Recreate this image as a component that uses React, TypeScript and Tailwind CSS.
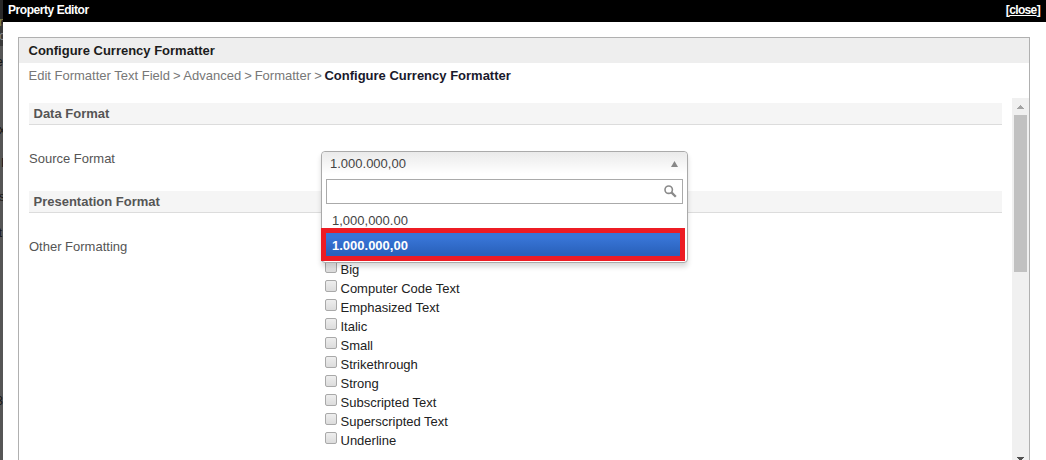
const formats = ['Big', 'Computer Code Text', 'Emphasized Text', 'Italic', 'Small', 'Strikethrough', 'Strong', 'Subscripted Text', 'Superscripted Text', 'Underline'];
const crumbs = ['Edit Formatter Text Field', 'Advanced', 'Formatter'];

function SectionBar({ title }: { title: string }) {
  return (
    <h2 className="flex h-[22px] items-center border-b border-[#dcdcdc] bg-[#f5f5f5] pl-[4.5px] text-[13px] font-bold text-[#555]">
      {title}
    </h2>
  );
}

function Select() {
  return (
    <div className="absolute top-[53px] left-[292px] h-[112px] w-[367px] rounded-[4px] border border-[#aaa] bg-white shadow-[0_4px_5px_rgba(0,0,0,0.15)]">
      <div className="flex h-[27px] items-center justify-between rounded-t-[4px] bg-linear-to-b from-[#eaeaea] to-white to-80% pr-[9px] pb-[4px] pl-[8px] text-[13px] text-[#444]">
        <span>1.000.000,00</span>
        <svg width="7" height="6" viewBox="0 0 7 6"><path d="M3.5 0 7 6H0Z" fill="#888" /></svg>
      </div>
      <div className="mx-[4px] flex h-[25px] items-center justify-end border border-[#aaa] bg-white pr-[5px]">
        <svg width="13" height="13" viewBox="0 0 13 13" fill="none" stroke="#8a8a8a">
          <circle cx="4.7" cy="4.7" r="3.7" strokeWidth="1.6" />
          <path d="m7.4 7.4 4.4 4.4" strokeWidth="2.3" />
        </svg>
      </div>
      <div className="flex h-[24px] items-center pt-[9px] pl-[10px] text-[13px] text-[#444]">1,000,000.00</div>
      <div className="-ml-px flex h-[33px] w-[364px] items-center border-[5px] border-[#ed1c24] bg-linear-to-b from-[#3875d7] from-20% to-[#2a62bc] to-90% pt-[2px] pl-[6px] text-[13px] font-bold text-white">
        1.000.000,00
      </div>
    </div>
  );
}

function Scrollbar() {
  return (
    <div className="flex w-[17px] shrink-0 flex-col items-center bg-[#f0f0f0]">
      <svg className="mt-[7px] shrink-0" width="7" height="4" viewBox="0 0 7 4" shapeRendering="crispEdges"><path d="M3 0h1v1h1v1h1v1h1v1H0V3h1V2h1V1h1Z" fill="#a3a3a3" /></svg>
      <div className="mt-[6px] h-[157px] w-[13px] bg-[#c1c1c1]" />
      <svg className="mt-auto mb-[-1px] shrink-0" width="7" height="4" viewBox="0 0 7 4" shapeRendering="crispEdges"><path d="M0 0h7v1H6v1H5v1H4v1H3V3H2V2H1V1H0Z" fill="#505050" /></svg>
    </div>
  );
}

function Backdrop() {
  return (
    <div className="relative w-[3px] shrink-0 overflow-hidden bg-[#565656] text-[12px] leading-[14px] text-[#161616]">
      <div className="h-[24px] bg-[#292929]" />
      <div className="h-[22px] bg-[#3b3b3b]" />
      <span className="absolute top-[15px] right-0 text-[#8e8a50]">r</span>
      <span className="absolute top-[29px] right-[-2px] text-[#888]">c</span>
      <span className="absolute top-[55px] right-0">e</span>
      <span className="absolute top-[123px] right-[-2px]">x</span>
      <span className="absolute top-[156px] left-[1px]">I</span>
      <span className="absolute top-[190px] right-[-2px]">s</span>
      <span className="absolute top-[226px] right-[1px]">t</span>
      <span className="absolute top-[394px] right-0">3</span>
    </div>
  );
}

export default function App() {
  return (
    <div className="flex h-[460px] w-[1046px] overflow-hidden bg-white font-['Liberation_Sans',Arial,sans-serif]">
      <Backdrop />
      <div className="flex min-w-0 flex-1 flex-col">
        <header className="flex h-[22px] shrink-0 items-center justify-between bg-black pr-[6px] pb-[3px] pl-[5px] text-[12px] tracking-[-0.45px] text-white">
          <h1 className="font-bold">Property Editor</h1>
          <a className="font-bold tracking-[-0.65px]">[<u>close</u>]</a>
        </header>
        <main className="mt-[15px] mr-[16px] ml-[15px] flex min-h-0 flex-1 flex-col border border-b-0 border-[#b0b0b0]">
          <div className="flex h-[25px] shrink-0 items-center bg-[#eee] pl-[9.5px] text-[13px] font-bold text-[#1c1c1c]">Configure Currency Formatter</div>
          <nav className="flex h-[35px] shrink-0 items-start pt-[3px] pl-[9.5px] text-[13px] leading-[19px] whitespace-pre text-[#777]">
            {crumbs.map((crumb) => (
              <span key={crumb}>
                {crumb}
                <span className="tracking-[-0.45px]"> &gt; </span>
              </span>
            ))}
            <strong className="font-bold text-[#19192c]">Configure Currency Formatter</strong>
          </nav>
          <div className="flex min-h-0 flex-1">
            <div className="relative mr-[10px] ml-[10px] min-w-0 flex-1 overflow-hidden pt-[5px]">
              <SectionBar title="Data Format" />
              <div className="h-[66px] pt-[24px] text-[13px] leading-[19px] text-[#555]">Source Format</div>
              <SectionBar title="Presentation Format" />
              <div className="flex text-[13px] leading-[19px] text-[#555]">
                <div className="w-[296px] pt-[24px]">Other Formatting</div>
                <ul className="pt-[47px] text-[#222]">
                  {formats.map((name) => (
                    <li key={name} className="flex h-[19px] gap-[3.5px]">
                      <span className="mt-[1px] size-[12px] rounded-[2px] border border-[#a9a9a9] bg-linear-to-b from-[#eee] to-[#dcdcdc]" />
                      {name}
                    </li>
                  ))}
                </ul>
              </div>
              <Select />
            </div>
            <Scrollbar />
          </div>
        </main>
      </div>
    </div>
  );
}
